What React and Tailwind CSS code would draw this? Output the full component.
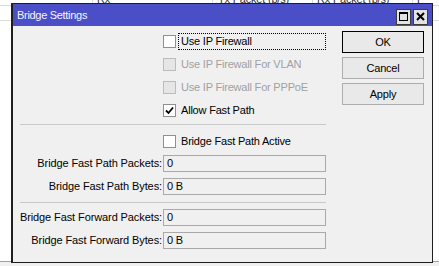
const font = { fontFamily: '"Liberation Sans", Arial, sans-serif' };

function Checkbox({ checked, disabled }) {
  return (
    <div
      className={`w-[13px] h-[13px] border flex items-center justify-center shrink-0 ${
        disabled ? 'bg-[#e6e6e6] border-[#bcbcbc]' : 'bg-white border-[#8f8f8f]'
      }`}
    >
      {checked && (
        <svg width="9" height="9" viewBox="0 0 9 9">
          <path d="M1 4.5 L3.5 7 L8 1.5" fill="none" stroke="#000" strokeWidth="1.8" />
        </svg>
      )}
    </div>
  );
}

function CheckRow({ label, checked, disabled, focused }) {
  return (
    <div className="h-[23px] flex items-center">
      <div className="w-[150px] shrink-0" />
      <Checkbox checked={checked} disabled={disabled} />
      <div
        className={`ml-[2px] h-[17px] flex items-center pl-[2px] ${
          focused ? 'w-[148px] border border-dotted border-black' : 'border border-transparent'
        } ${disabled ? 'text-[#a0a0a0]' : 'text-black'}`}
      >
        {label}
      </div>
    </div>
  );
}

function FieldRow({ label, value, className = '' }) {
  return (
    <div className={`h-[17px] flex items-center ${className}`}>
      <div className="w-[150px] shrink-0 text-right pr-[1px] text-black tracking-[-0.1px]">{label}</div>
      <div className="w-[163px] h-[17px] border border-[#a9a9a9] flex items-center pl-[3px] text-black">
        {value}
      </div>
    </div>
  );
}

function Separator({ className = '' }) {
  return <div className={`ml-[7px] w-[306px] h-px bg-[#c8c8c8] ${className}`} />;
}

function TitleButton({ children }) {
  return (
    <div className="w-[15px] h-[16px] bg-[#e3e3e3] border border-[#3c3c3c] flex items-center justify-center">
      {children}
    </div>
  );
}

export default function App() {
  return (
    <div
      className="relative w-[439px] h-[266px] bg-white overflow-hidden text-[11px] tracking-[-0.2px]"
      style={font}
    >
      {/* list behind the dialog */}
      <div className="absolute left-0 right-0 top-[-9px] h-[15px] border-b border-[#d9d9d9] flex text-[#333]">
        <div className="w-[93px] border-r border-[#d9d9d9]" />
        <div className="w-[120px] border-r border-[#d9d9d9] pl-[4px]">Rx</div>
        <div className="w-[100px] border-r border-[#d9d9d9] pl-[5px]">Tx Packet (p/s)</div>
        <div className="w-[100px] border-r border-[#d9d9d9] pl-[4px]">Rx Packet (p/s)</div>
        <div className="pl-[4px]">F</div>
      </div>
      <div className="absolute left-0 right-0 top-[20px] h-px bg-[#dcdcdc]" />
      <div className="absolute left-0 right-0 top-[261px] bottom-0 border-t border-[#a0a0a0] bg-[#f0f0f0]" />

      {/* dialog */}
      <div className="absolute left-[11px] top-[3px] w-[422px] h-[260px] border border-[#1e1e1e] border-l-2 bg-[#f0f0f0] flex flex-col">
        <div className="h-[22px] bg-[#4a4fc7] flex items-center pl-[4px] pr-[4px] shrink-0">
          <span className="text-[#f4f4ff] text-[11px] tracking-[-0.3px] mt-[1px]">Bridge Settings</span>
          <div className="ml-auto flex gap-[2px] mt-[3px]">
            <TitleButton>
              <div className="w-[9px] h-[9px] border border-black border-t-2" />
            </TitleButton>
            <TitleButton>
              <svg width="9" height="9" viewBox="0 0 9 9">
                <path d="M1 1 L8 8 M8 1 L1 8" stroke="#000" strokeWidth="2" />
              </svg>
            </TitleButton>
          </div>
        </div>

        <div className="flex flex-1">
          <div className="w-[329px] pt-[4px]">
            <CheckRow label="Use IP Firewall" focused />
            <CheckRow label="Use IP Firewall For VLAN" disabled />
            <CheckRow label="Use IP Firewall For PPPoE" disabled />
            <CheckRow label="Allow Fast Path" checked />
            <Separator className="mt-[2px]" />
            <div className="mt-[5px]">
              <CheckRow label="Bridge Fast Path Active" />
            </div>
            <FieldRow label="Bridge Fast Path Packets:" value="0" className="mt-[2px]" />
            <FieldRow label="Bridge Fast Path Bytes:" value="0 B" className="mt-[6px]" />
            <Separator className="mt-[7px]" />
            <FieldRow label="Bridge Fast Forward Packets:" value="0" className="mt-[6px]" />
            <FieldRow label="Bridge Fast Forward Bytes:" value="0 B" className="mt-[6px]" />
          </div>

          <div className="flex flex-col gap-[4px] pt-[5px]">
            <button className="w-[82px] h-[22px] border border-black bg-[#e9e9e9] text-black text-[11px]">
              OK
            </button>
            <button className="w-[82px] h-[22px] border border-[#adadad] bg-[#e9e9e9] text-black text-[11px]">
              Cancel
            </button>
            <button className="w-[82px] h-[22px] border border-[#adadad] bg-[#e9e9e9] text-black text-[11px]">
              Apply
            </button>
          </div>
        </div>
      </div>
    </div>
  );
}
